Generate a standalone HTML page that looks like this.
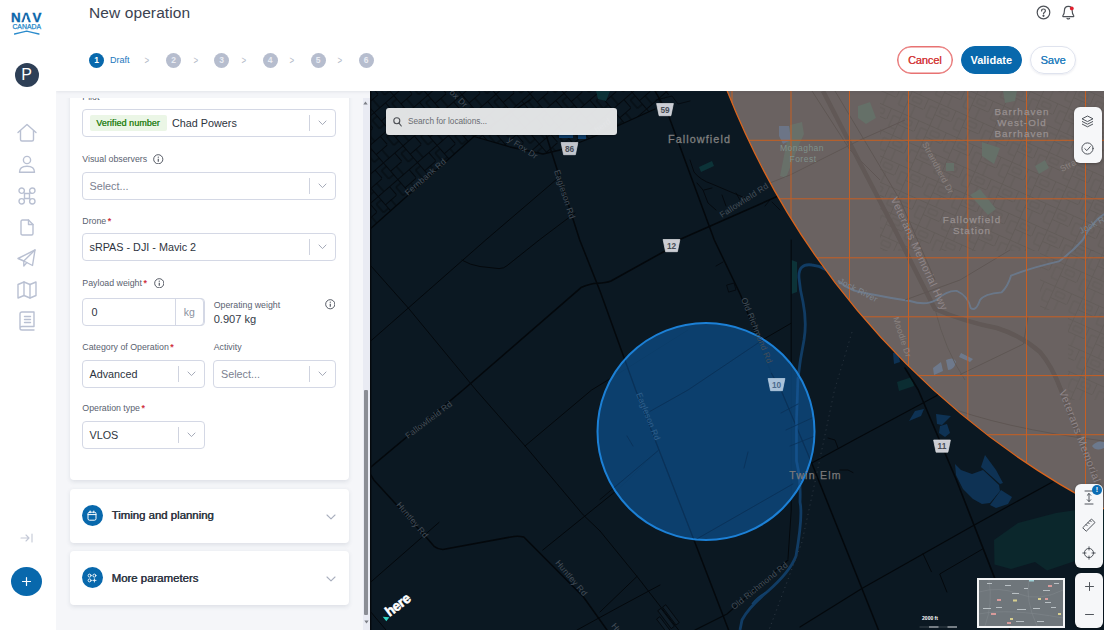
<!DOCTYPE html>
<html lang="en">
<head>
<meta charset="utf-8">
<title>New operation</title>
<style>
*{box-sizing:border-box;margin:0;padding:0}
html,body{width:1104px;height:630px;overflow:hidden;background:#fff;font-family:"Liberation Sans",sans-serif;color:#2b3340}
.abs{position:absolute}
#side{position:absolute;left:0;top:0;width:56px;height:630px;background:#fff;z-index:5}
#side svg{position:absolute;overflow:visible}
.nico{stroke:#b9c0d2;stroke-width:1.4;fill:none;stroke-linecap:round;stroke-linejoin:round}
#hdr{position:absolute;left:56px;top:0;width:1048px;height:91px;background:#fff;box-shadow:0 1px 3px rgba(40,50,80,.09);z-index:3}
#title{position:absolute;left:33px;top:3.500px;font-size:15.5px;color:#3b4250;letter-spacing:.1px}
.step{position:absolute;top:53px;width:15px;height:15px;border-radius:50%;background:#b6bdce;color:#e9ecf3;font-size:8.5px;font-weight:bold;text-align:center;line-height:15px}
.step.on{background:#0868ac;color:#fff}
.gt{position:absolute;top:54px;font-size:10px;color:#b3b9c8;line-height:13px;transform:scaleX(.8)}
.btn{position:absolute;top:46px;height:28px;border-radius:14px;font-size:11px;text-align:center;line-height:26px;border:1px solid}
#panel{position:absolute;left:56px;top:91px;width:314px;height:539px;background:#f5f6f9;overflow:hidden}
.card{position:absolute;left:13.5px;width:279.5px;background:#fff;border-radius:4px;box-shadow:0 1.500px 4px rgba(60,70,100,.12)}
.lbl{position:absolute;font-size:8.8px;color:#59616f;white-space:nowrap;line-height:10px}
.lbl i{font-style:normal;color:#d0343f;font-weight:bold;margin-left:1.5px}
.sel{position:absolute;height:28px;border:1px solid #d4d8e5;border-radius:4px;background:#fff;font-size:10.8px;line-height:27px;color:#2d3440;padding-left:7px;white-space:nowrap}
.sel.ph{color:#7b8190}
.sel b{position:absolute;right:25px;top:5px;width:1px;height:16px;background:#cfd3df}
.sel svg{position:absolute;right:8px;top:10px}
.info{position:absolute;width:10.5px;height:10.5px}
.ctitle{position:absolute;left:42px;font-size:11.4px;font-weight:normal;color:#2c333f;text-shadow:.45px 0 0 #2c333f;letter-spacing:0;white-space:nowrap}
.cico{position:absolute;left:12px;width:21px;height:21px;border-radius:50%;background:#0868ac}
#map{position:absolute;left:370px;top:91px;width:734px;height:539px;background:#0b1822;overflow:hidden}
.mbox{position:absolute;background:#f6f7f9;border-radius:6px;box-shadow:0 1px 3px rgba(0,0,0,.3)}
</style>
</head>
<body>

<!-- ============ SIDEBAR ============ -->
<div id="side">
  <!-- logo -->
  <svg style="left:11px;top:11px" width="32" height="26" viewBox="0 0 32 26" font-family="Liberation Sans,sans-serif">
    <g font-weight="bold" font-size="13.3" fill="#0a66ab">
      <text x="0.100 10.360 21.420" y="11.300" stroke="#0a66ab" stroke-width=".35">NAV</text>
      <path d="M12.350 11.900 L12.557 11.300 L13.369 8.962 L13.797 7.520 L14.959 3.900 L16.127 7.520 L16.556 8.962 L17.368 11.300 L17.580 11.900 Z" fill="#fff"/>
    </g>
    <text x="15.700" y="18.400" text-anchor="middle" font-size="6.500" fill="#2386c8" stroke="#2386c8" stroke-width=".25" textLength="28.600" lengthAdjust="spacingAndGlyphs">CANADA</text>
    <path d="M3.600 23 Q9 21.600 15.700 20.200 Q22 21.600 27.900 23" stroke="#2a8bcc" stroke-width="1.300" fill="none" stroke-linecap="round"/>
  </svg>
  <!-- avatar -->
  <div class="abs" style="left:14.5px;top:62.5px;width:24px;height:24px;border-radius:50%;background:#2e3f56;color:#fff;font-size:16px;line-height:24px;text-align:center">P</div>
  <!-- nav icons -->
  <svg style="left:17px;top:123px" width="20" height="20" viewBox="0 0 20 20" class="nico"><path d="M1 9.5 L10 1.5 L19 9.5"/><path d="M3.5 7.8 V16.5 Q3.5 18 5 18 H15 Q16.500 18 16.5 16.5 V7.8"/></svg>
  <svg style="left:18px;top:155px" width="18" height="19" viewBox="0 0 18 19" class="nico"><circle cx="9" cy="5" r="3.6"/><path d="M1.5 17.2 Q1.5 11.2 9 11.2 Q16.500 11.2 16.5 17.2 Z"/></svg>
  <svg style="left:18px;top:187px" width="18" height="18" viewBox="0 0 18 18" class="nico"><rect x="6.500" y="6.500" width="5" height="5" rx=".5"/><circle cx="3.700" cy="3.700" r="2.700"/><circle cx="14.300" cy="3.700" r="2.700"/><circle cx="3.700" cy="14.300" r="2.700"/><circle cx="14.300" cy="14.300" r="2.700"/><path d="M5.600 5.600 L6.600 6.600 M12.400 5.600 L11.400 6.600 M5.600 12.400 L6.600 11.400 M12.400 12.400 L11.400 11.400"/></svg>
  <svg style="left:20px;top:219px" width="14" height="17" viewBox="0 0 14 17" class="nico"><path d="M1 2.500 Q1 1 2.500 1 H8.5 L13 5.500 V14.5 Q13 16 11.5 16 H2.500 Q1 16 1 14.5 Z"/><path d="M8.5 1 V5.500 H13"/></svg>
  <svg style="left:17px;top:249px" width="19" height="19" viewBox="0 0 19 19" class="nico"><path d="M18 1 L1 9.500 L6.800 12 L15.500 16.500 Z"/><path d="M18 1 L6.800 12 V17 L9.800 13.600"/></svg>
  <svg style="left:17px;top:281px" width="20" height="18" viewBox="0 0 20 18" class="nico"><path d="M1 3.500 L7 1 L13 3.500 L19 1 V14.5 L13 17 L7 14.5 L1 17 Z"/><path d="M7 1 V14.5 M13 3.500 V17"/></svg>
  <svg style="left:19px;top:311px" width="16" height="20" viewBox="0 0 16 20" class="nico"><path d="M3 1 H15 V15.500 H3 Q1 15.500 1 17.2 Q1 19 3 19 H15 M1 17.2 V3 Q1 1 3 1"/><path d="M5.500 5.500 H11.5 M5.500 8.5 H11.5 M5.500 11.5 H11.5"/></svg>
  <!-- collapse -->
  <svg style="left:20px;top:533px" width="13" height="10" viewBox="0 0 13 10" fill="none" stroke="#c3c8d6" stroke-width="1.100" stroke-linecap="round" stroke-linejoin="round"><path d="M1 5 H9 M6 2 L9 5 L6 8 M12 1 V9"/></svg>
  <!-- add -->
  <div class="abs" style="left:11px;top:566.5px;width:31px;height:29px;border-radius:50%;background:#0868ac"></div>
  <svg style="left:22px;top:576.5px" width="9" height="9" viewBox="0 0 9 9" stroke="#fff" stroke-width="1.200" stroke-linecap="round"><path d="M4.500 0.500 V8.5 M0.500 4.500 H8.5"/></svg>
</div>

<!-- ============ HEADER ============ -->
<div id="hdr">
  <div id="title">New operation</div>
  <div class="step on" style="left:33px">1</div>
  <div class="abs" style="left:54px;top:55px;font-size:9px;color:#1c77bd;line-height:11px">Draft</div>
  <div class="gt" style="left:88px">&gt;</div>
  <div class="step" style="left:110px">2</div>
  <div class="gt" style="left:136.500px">&gt;</div>
  <div class="step" style="left:158px">3</div>
  <div class="gt" style="left:184.500px">&gt;</div>
  <div class="step" style="left:206.500px">4</div>
  <div class="gt" style="left:232.500px">&gt;</div>
  <div class="step" style="left:254.500px">5</div>
  <div class="gt" style="left:281px">&gt;</div>
  <div class="step" style="left:302.500px">6</div>

  <!-- help + bell -->
  <svg class="abs" style="left:979.500px;top:5px" width="15" height="15" viewBox="0 0 15 15" fill="none" stroke="#4d5157" stroke-width="1.200"><circle cx="7.500" cy="7.500" r="6.300"/><path d="M5.600 6 Q5.600 4 7.500 4 Q9.400 4 9.400 5.700 Q9.400 6.800 8.300 7.400 Q7.500 7.900 7.500 8.800" stroke-linecap="round"/><circle cx="7.500" cy="10.800" r=".5" fill="#4d5157"/></svg>
  <svg class="abs" style="left:1005px;top:5px" width="15" height="16" viewBox="0 0 15 16" fill="none" stroke="#4d5157" stroke-width="1.200" stroke-linecap="round" stroke-linejoin="round"><path d="M7.300 1.300 C4.200 1.300 3.400 3.700 3.400 5.700 C3.400 8.200 3 9.600 1.900 10.600 Q1.500 11.600 2.600 11.600 H12 Q13.100 11.600 12.700 10.600 C11.600 9.600 11.200 8.200 11.200 5.700 C11.200 3.700 10.400 1.300 7.300 1.300 Z"/><path d="M6 13.300 Q7.300 14.600 8.600 13.300"/><circle cx="10.800" cy="3.400" r="1.900" fill="#e0202e" stroke="none"/></svg>

  <div class="btn" style="left:841px;width:55.500px;border-color:#e87272;box-shadow:inset 0 0 0 .5px #e87272;color:#d43c3c;font-weight:bold;letter-spacing:-.1px"><span style="font-weight:normal;text-shadow:.3px 0 0 #d43c3c">Cancel</span></div>
  <div class="btn" style="left:904.500px;width:61.500px;border-color:#0868ac;background:#0868ac;color:#fff;font-weight:bold">Validate</div>
  <div class="btn" style="left:974px;width:46px;border-color:#dfe3ee;color:#2a7fbe;box-shadow:0 1px 2px rgba(80,90,130,.12)"><span style="text-shadow:.3px 0 0 #2a7fbe">Save</span></div>
</div>

<!-- ============ LEFT PANEL ============ -->
<div id="panel">
  <!-- main form card (scrolled; top cut off) -->
  <div class="card" style="top:-30px;height:419px;border-radius:0 0 4px 4px">
    <div class="lbl" style="left:12.800px;top:30.500px">Pilot <i>*</i></div>

    <div class="sel" style="left:12px;top:48px;width:254px">
      <span class="abs" style="left:7px;top:4.500px;width:77px;height:16.5px;border-radius:2px;background:#ebf6e6;color:#2f8520;font-size:8.9px;line-height:16.5px;text-align:center;text-shadow:.25px 0 0 #2f8520;letter-spacing:.1px">Verified number</span>
      <span class="abs" style="left:89.500px;top:0">Chad Powers</span>
      <b></b><svg width="9" height="6" viewBox="0 0 9 6" fill="none" stroke="#a5aab8" stroke-width="1" stroke-linecap="round" stroke-linejoin="round"><path d="M1 1 L4.500 4.600 L8 1"/></svg>
    </div>

    <div class="lbl" style="left:12.800px;top:93px">Visual observers</div>
    <svg class="info" style="left:83.500px;top:92.500px" viewBox="0 0 11 11" fill="none" stroke="#3d434e" stroke-width=".9"><circle cx="5.500" cy="5.500" r="4.800"/><path d="M5.500 4.900 V8" stroke-width="1.100"/><circle cx="5.500" cy="3.300" r=".6" fill="#3d434e" stroke="none"/></svg>
    <div class="sel ph" style="left:12px;top:111px;width:254px">Select...
      <b></b><svg width="9" height="6" viewBox="0 0 9 6" fill="none" stroke="#a5aab8" stroke-width="1" stroke-linecap="round" stroke-linejoin="round"><path d="M1 1 L4.500 4.600 L8 1"/></svg>
    </div>

    <div class="lbl" style="left:12.800px;top:154.500px">Drone<i>*</i></div>
    <div class="sel" style="left:12px;top:172px;width:254px">sRPAS - DJI - Mavic 2
      <b></b><svg width="9" height="6" viewBox="0 0 9 6" fill="none" stroke="#a5aab8" stroke-width="1" stroke-linecap="round" stroke-linejoin="round"><path d="M1 1 L4.500 4.600 L8 1"/></svg>
    </div>

    <div class="lbl" style="left:12.800px;top:217px">Payload weight<i>*</i></div>
    <svg class="info" style="left:84px;top:216.500px" viewBox="0 0 11 11" fill="none" stroke="#3d434e" stroke-width=".9"><circle cx="5.500" cy="5.500" r="4.800"/><path d="M5.500 4.900 V8" stroke-width="1.100"/><circle cx="5.500" cy="3.300" r=".6" fill="#3d434e" stroke="none"/></svg>
    <div class="sel" style="left:12px;top:236.500px;width:123.500px;padding-left:9px">0
      <span class="abs" style="right:0;top:-1px;width:29.500px;height:28px;border:1px solid #d4d8e5;border-radius:0 4px 4px 0;color:#8c92a0;text-align:center;font-size:10.500px">kg</span>
    </div>
    <div class="lbl" style="left:144.200px;top:238.500px">Operating weight</div>
    <div class="abs" style="left:144.200px;top:252px;font-size:11.100px;line-height:13px;color:#343b48">0.907 kg</div>
    <svg class="info" style="left:255px;top:238px" viewBox="0 0 11 11" fill="none" stroke="#3d434e" stroke-width=".9"><circle cx="5.500" cy="5.500" r="4.800"/><path d="M5.500 4.900 V8" stroke-width="1.100"/><circle cx="5.500" cy="3.300" r=".6" fill="#3d434e" stroke="none"/></svg>

    <div class="lbl" style="left:12.800px;top:281px">Category of Operation<i>*</i></div>
    <div class="lbl" style="left:144.200px;top:281px">Activity</div>
    <div class="sel" style="left:12px;top:298.500px;width:123px">Advanced
      <b></b><svg width="9" height="6" viewBox="0 0 9 6" fill="none" stroke="#a5aab8" stroke-width="1" stroke-linecap="round" stroke-linejoin="round"><path d="M1 1 L4.500 4.600 L8 1"/></svg>
    </div>
    <div class="sel ph" style="left:143.500px;top:298.500px;width:122.500px">Select...
      <b></b><svg width="9" height="6" viewBox="0 0 9 6" fill="none" stroke="#a5aab8" stroke-width="1" stroke-linecap="round" stroke-linejoin="round"><path d="M1 1 L4.500 4.600 L8 1"/></svg>
    </div>

    <div class="lbl" style="left:12.800px;top:342px">Operation type<i>*</i></div>
    <div class="sel" style="left:12px;top:360px;width:123px">VLOS
      <b></b><svg width="9" height="6" viewBox="0 0 9 6" fill="none" stroke="#a5aab8" stroke-width="1" stroke-linecap="round" stroke-linejoin="round"><path d="M1 1 L4.500 4.600 L8 1"/></svg>
    </div>
  </div>

  <!-- Timing and planning -->
  <div class="card" style="top:398px;height:53.500px">
    <div class="cico" style="top:16px"><svg class="abs" style="left:5.500px;top:5px" width="10" height="11" viewBox="0 0 10 11" fill="none" stroke="#fff" stroke-width="1" stroke-linecap="round" stroke-linejoin="round"><rect x="1" y="2.200" width="8" height="8" rx="1.500"/><path d="M1 4.600 H9 M3.200 1 V2.800 M6.800 1 V2.800"/></svg></div>
    <div class="ctitle" style="top:19.500px">Timing and planning</div>
    <svg class="abs" style="left:256px;top:24.500px" width="10" height="6" viewBox="0 0 10 6" fill="none" stroke="#a9afbe" stroke-width="1.100" stroke-linecap="round" stroke-linejoin="round"><path d="M1 1 L5 4.800 L9 1"/></svg>
  </div>

  <!-- More parameters -->
  <div class="card" style="top:460.300px;height:54px">
    <div class="cico" style="top:16px"><svg class="abs" style="left:5.500px;top:5.500px" width="10" height="10" viewBox="0 0 10 10" fill="none" stroke="#fff" stroke-width=".9" stroke-linecap="round"><circle cx="2.600" cy="2.600" r="1.500"/><circle cx="7.400" cy="2.600" r="1.500"/><circle cx="2.600" cy="7.400" r="1.500"/><path d="M7.400 5.800 V9 M5.800 7.400 H9"/></svg></div>
    <div class="ctitle" style="top:20.500px">More parameters</div>
    <svg class="abs" style="left:256px;top:24.500px" width="10" height="6" viewBox="0 0 10 6" fill="none" stroke="#a9afbe" stroke-width="1.100" stroke-linecap="round" stroke-linejoin="round"><path d="M1 1 L5 4.800 L9 1"/></svg>
  </div>

  <div class="abs" style="left:0;top:0;width:306px;height:6.5px;background:#f5f6f9"></div>
  <!-- scrollbar -->
  <div class="abs" style="left:306.800px;top:6.800px;width:7.200px;height:533px;background:#e9ebf3"></div>
  <div class="abs" style="left:308px;top:299px;width:4px;height:225px;background:#8b8e95;border-radius:1px"></div>
  <svg class="abs" style="left:307.300px;top:9.600px" width="5" height="4" viewBox="0 0 5 4"><path d="M2.500 .5 L4.700 3.500 H.3 Z" fill="#7b7e86"/></svg>
  <svg class="abs" style="left:307.500px;top:529px" width="5" height="4" viewBox="0 0 5 4"><path d="M2.500 3.500 L4.700 .5 H.3 Z" fill="#7b7e86"/></svg>
</div>


<!-- ============ MAP ============ -->
<div id="map">
<svg class="abs" style="left:0;top:0" width="734" height="539" viewBox="370 91 734 539" font-family="Liberation Sans,sans-serif">
  <defs>
    <clipPath id="zoneclip"><circle cx="1473.6" cy="-203.5" r="802.4"/></clipPath>
    <clipPath id="nwclip"><path d="M369 91 H672 L655 109 L592 137.500 L560 150 L543 154 L510 147 L474 136.500 L369 230 Z"/></clipPath>
    <pattern id="streets" width="26" height="22" patternUnits="userSpaceOnUse" patternTransform="rotate(-41)">
      <path d="M0 .5 H26 M0 11.5 H15 M.5 0 V22 M15.500 0 V11 M8 11.500 V22 M20 5 H26 M20 5 V16 H26" stroke="#04090e" stroke-width="1" fill="none"/>
    </pattern>
    <pattern id="zstreets" width="30" height="24" patternUnits="userSpaceOnUse" patternTransform="rotate(24)">
      <path d="M0 .5 H30 M0 12.500 H18 M.5 0 V24 M18.500 0 V12 M9 12.500 V24 M23 6 H30 M23 6 V18 H30 M4 4 H13 V9 H4 Z" stroke="#5e5654" stroke-width="1" fill="none"/>
    </pattern>
  </defs>

  <rect x="369" y="91" width="735" height="539" fill="#0b1822"/>

  <!-- green / water patches on dark -->
  <path d="M791.500 260 L797 262 L797 292 L791.500 294 Z" fill="#0c3338"/>
  <path d="M994 540 L1018 523 L1056 513 L1104 506 V560 L1075 561 L1047 570.500 L1035 562 L1011 569 L994.500 564.500 Z" fill="#0b272c"/>
  <path d="M922 117 l8 -4 l3 5 l-9 4 z" fill="#0c3338"/>
  <path d="M893 353 l5 -2 l2 11 l-6 2z" fill="#0e3254"/>
  <path d="M897 382 l15 -5 l2 9 l-15 5z" fill="#0b2d32"/>
  <path d="M699 167 l13 -6 l2 5 l-13 6 z" fill="#0c3338"/>
  <g fill="#0e3254">
    <path d="M909 421 L915 411 L924 409 L921 416 Z"/>
    <path d="M936 414 L951 416 L942 425 L937 424 Z"/>
    <path d="M940 426 L947 424 L950 433 L945 437 L939 433 Z"/>
    <path d="M955 464 L961 470 L972 474 L983 470 L999 485 L1000 491 L990 503 L982 504 L973 499 L963 489 L956 475 Z"/>
    <path d="M985 455 L996 470 L1003 483 L1000 484 L981 467 Z"/>
    <path d="M1001 490 L1012 497 L1008 504 L996 508 L990 505 Z"/>
    
  </g>

  <!-- Jock river on dark -->
  <path d="M838 280.500 Q826 266 812 265 Q798 263 799 278 Q800 290 803 302 Q807 322 804 340 Q800 360 798 378 L796.500 420 L796.500 461 Q801 480 800 502 Q803 516 796 556 Q790 572 767 592 Q748 608 742 620 L740 630" stroke="#113c64" stroke-width="2.800" fill="none" stroke-linejoin="round"/>
  <path d="M767 592 Q758 596 752 604" stroke="#12406b" stroke-width="1.500" fill="none"/>

  <!-- dotted rail line -->
  <path d="M852 332 Q840 372 834.500 390 L815 482 L802 542 L769 630" stroke="#2a3540" stroke-width="1" stroke-dasharray="1.200 3.600" fill="none"/>

  <!-- dense subdivision, NW corner -->
  <rect x="369" y="91" width="300" height="150" fill="url(#streets)" clip-path="url(#nwclip)"/>

  <!-- roads -->
  <g stroke="#04080c" fill="none" stroke-linecap="round" stroke-linejoin="round">
    <!-- Fernbank -->
    <path d="M369 230 L474 136.500 L530 100" stroke-width="1.300"/>
    <path d="M474 136.500 L510 147 L543 154 L560 150 L592 137.500 L655 109" stroke-width="1.300"/>
    <!-- thin parallel -->
    <path d="M369 342.500 L408.300 308 L485.700 240 L557 179" stroke-width="1"/>
    <!-- NW-SE line B -->
    <path d="M369 263.800 L408.300 308 L476 390 L526 447 L583.300 515 L600 531" stroke-width="1"/>
    <!-- curved C -->
    <path d="M462 260.200 Q470 265 480 266.500 L499 268.600 Q504 268.500 507 265.700 L539.200 240 L575 213" stroke-width="1"/>
    <!-- Fallowfield Rd -->
    <path d="M369 468.600 L463 390 L581 287.600 Q590 283.500 597.600 283.300 Q606 283 611 281 L665.500 250.700 L678.600 240 L781 194.800" stroke-width="1.600"/>
    <!-- Eagleson -->
    <path d="M546.400 136 L579.700 240 L600 291 L635.700 390 L694 540 L728.600 630" stroke-width="1.500"/>
    <!-- Old Richmond -->
    <path d="M655 91 L667.900 113.800 L714.300 240 L740.500 294.800 L771.400 373.300 L781 390 L812 463.800 L878.500 630" stroke-width="1.500"/>
    <!-- E / F -->
    <path d="M525 446 L591.600 390 L619 373.300 L688 330" stroke-width="1"/>
    <path d="M542.800 550 L619 488.500 L658 450.700" stroke-width="1"/>
    <!-- Huntley -->
    <path d="M369 472 L373.800 480 L426 537 L434.500 546.700 Q438 549.500 442.800 549.500 L514 536.400 Q519 535.800 523.800 537 L583.300 596.700 L607 630" stroke-width="1.500"/>
    <path d="M369 583.600 L439 522.400" stroke-width="1"/>
    <path d="M370 611 L386 630" stroke-width="1"/>
    <path d="M577 630 L619 607 L660 585" stroke-width="1"/>
    <!-- link & boundary -->
    <path d="M764.300 338.800 L791 323.300 M791.200 240 V511 L788 558.600" stroke-width="1"/>
    <path d="M764 339 L688 390 L650 411.400" stroke-width=".8"/>
    <path d="M695 540 L792.800 484" stroke-width=".8"/>
    <path d="M600 499.500 L658 450.700" stroke-width=".8"/>
    <!-- south-middle -->
    <path d="M600 531 L637 576.400 L678.600 630 M600 612 L637 576.400" stroke-width="1"/>
    <path d="M695 630 L727 614 L788 560" stroke-width="1.200"/>
    <g transform="translate(666,620) rotate(53)" stroke-width=".8" fill="#0f1d28"><rect x="-12" y="-9" width="22" height="4"/><rect x="-12" y="-3" width="22" height="4"/><rect x="-6" y="3" width="16" height="4"/></g>
    <path d="M828 438 L835 440 L838 448 M840 470 L848 470 L853 472.600" stroke-width=".9"/>
    <!-- Moodie / 11 -->
    <path d="M905 368 L918.300 390 L956.400 480 L994.500 577.600 L1010 630" stroke-width="1.600"/>
    <path d="M810 464 L854 440 L936 396 L945 388" stroke-width="1.100"/>
    <path d="M1052.800 481.700 L973 525.700 L862.300 588.300 L800 627" stroke-width="1.200"/>
    <path d="M923 553.800 L931.400 571.700 M982.600 549 L939.700 574 L946.900 592" stroke-width="1"/>
    <!-- small stubs near Fallowfield -->
    <path d="M690 160 L694 172 Q700 180 712 184 L745 198 M697 183 L703 190 L708 203 L716 210 M704 190 L712 188 M722 195 L726 206 M736 193 L740 200" stroke-width=".9"/>
    <path d="M656 100 L672 96 L678 104 L690 101" stroke-width=".8"/>
    <path d="M727 285 L734 283 L736 290 L729 292 Z M716 266 L723 262" stroke-width=".8"/>
    <path d="M780 210 L772 202 M770 200 L765 206" stroke-width=".8"/>
  </g>

  <!-- restricted zone -->
  <g clip-path="url(#zoneclip)">
    <rect x="700" y="91" width="404" height="420" fill="#6b6361"/>
    <!-- faint streets NE -->
    <rect x="880" y="91" width="224" height="160" fill="url(#zstreets)" opacity=".55"/>
    <rect x="1040" y="250" width="64" height="60" fill="url(#zstreets)" opacity=".5"/><rect x="1068" y="310" width="36" height="90" fill="url(#zstreets)" opacity=".5"/>
    <g fill="#667069">
      <path d="M858 106 l12 -4 l6 16 l-10 6 l-8 -6z"/><path d="M1003 91 h14 l-2 10 l-10 2z"/><path d="M982 142 l18 6 l-6 16 l-12 -8z"/><path d="M946 163 h8 v8 h-8z"/><path d="M1035 166 l10 -6 l4 8 l-10 6z"/><path d="M970 195 l10 -6 l16 20 l-8 6z"/><path d="M790 125 l12 -3 l2 12 l-8 18 l-10 26 l-6 -2 z" fill="#69706a"/>
    </g>
    <path d="M779 126 h10 l2 14 l-8 4 l-4 -8z" fill="#6d7587"/>
    <path d="M1092 446 q5 -6 12 -4 v6 q-8 4 -12 -2z" fill="#6d7a8e"/>
    <path d="M933 368 l8 -6 l2 9 l-9 4z M946 360 q8 -4 10 2 q-2 8 -8 8z M961 353 l12 6 l-3 3 l-11 -5z" fill="#6e7a8d"/>
    <!-- Veterans Memorial Hwy -->
    <path d="M823 91 L860 163 L896 232 Q920 280 935 309 Q965 322 997 328 Q1022 336 1040 352 Q1052 366 1061 390 Q1080 440 1104 497" stroke="#615957" stroke-width="4.500" fill="none"/>
    <path d="M935 309 Q945 350 965 380" stroke="#625a58" stroke-width="1" fill="none"/>
    <!-- Jock river in zone -->
    <path d="M838 280.500 Q850 292 870 294 Q890 298 910 301 Q926 306 936 300 Q948 290 957 291 Q968 296 970.700 308 Q976 312 980 300 Q984 294 1001.600 292.400 Q1008 286 1011 275.700 Q1030 268 1058.800 261.400 Q1072 252 1082.600 240 Q1092 222 1104 214" stroke="#6b788a" stroke-width="1.900" fill="none"/>
    <!-- faint roads -->
    <g stroke="#5f5755" stroke-width="1" fill="none">
      <path d="M727 200 L790 175 L860 140 L905 120"/><path d="M812 91 L850 150 L880 180"/><path d="M835 91 L900 200 L935 280"/><path d="M940 404 Q1000 428 1104 441"/><path d="M960 374.600 L1023.500 344 L1028 316"/><path d="M905 300 L960 280 L1010 250"/>
    </g>
    <!-- grid -->
    <g stroke="#cc5f20" stroke-width="1" opacity=".95">
      <path d="M732 91 V120 M791 91 V260 M849.500 91 V320 M908.500 91 V380 M967.800 91 V430 M1026.500 91 V475 M1085.500 91 V510"/>
      <path d="M740 140.300 H1104 M770 198.800 H1104 M805 257.800 H1104 M850 316.800 H1104 M905 375.600 H1104 M975 434.700 H1104"/>
    </g>
  </g>
  <circle cx="1473.600" cy="-203.500" r="802.400" fill="none" stroke="#d9651f" stroke-width="1.300"/>

  <!-- operation circle -->
  <circle cx="706" cy="431.500" r="108.500" fill="#0d487c" fill-opacity=".84" stroke="#1c80d6" stroke-width="2"/>

  <!-- roads seen through the circle -->
  <defs><clipPath id="opclip"><circle cx="706" cy="431.500" r="107.500"/></clipPath></defs>
  <g clip-path="url(#opclip)" fill="none" stroke="#0a3158" stroke-linecap="round">
    <path d="M600 291 L635.700 390 L694 540" stroke-width="1.200"/>
    <path d="M764.300 338.800 L688 390 L650 411.400" stroke-width=".9"/>
    <path d="M600 499.500 L658 450.700" stroke-width=".9"/>
    <path d="M695 540 L792.800 484" stroke-width=".9"/>
    <path d="M771.400 373.300 L781 390 L812 463.800" stroke-width="1.100"/>
    <path d="M798 378 L796.500 420 L796.500 461 Q801 480 800 502" stroke="#14508a" stroke-width="2.600"/>
    <path d="M781 413 L798 404 M786 430 L812 418 M790 446 L815 436" stroke-width=".8"/>
    <path d="M627 436 L633 446 M748 452 L744 468" stroke-width=".8"/>
  </g>

  <!-- labels -->
  <g fill="#444e58" font-size="8.500" letter-spacing=".2">
    <text transform="translate(408,196) rotate(-41)">Fernbank Rd</text>
    <text transform="translate(507,141) rotate(33)">y Fox Dr</text>
    <text transform="translate(449,93) rotate(45)">ox Dr</text>
    <text transform="translate(554,171) rotate(72)">Eagleson Rd</text>
    <text transform="translate(722,218) rotate(-33)">Fallowfield Rd</text>
    <text transform="translate(597,133) rotate(-35)">herd</text>
    <text transform="translate(408,439) rotate(-37)">Fallowfield Rd</text>
    <text transform="translate(396,505) rotate(50)">Huntley Rd</text>
    <text transform="translate(555,563) rotate(50)">Huntley Rd</text>
    <text transform="translate(611,626) rotate(50)">Hu</text>
    <text transform="translate(741,299) rotate(68)">Old Richmond Rd</text>
    <text transform="translate(734,610) rotate(-39)">Old Richmond Rd</text>
    <text transform="translate(636,394) rotate(68)" fill="#2f5f8c">Eagleson Rd</text>
  </g>
  <g fill="#8a8280" font-size="8.500" letter-spacing=".3">
    <text transform="translate(838,283) rotate(27)" fill="#7e858f">Jock River</text>
    <text transform="translate(1081,234) rotate(-28)" fill="#7a8590">Jock R</text>
    <text transform="translate(893,318) rotate(72)">Moodie Dr</text>
    <text transform="translate(922,144) rotate(62)">Strandherd Dr</text>
    <text transform="translate(1062,172) rotate(-28)">Stra</text>
  </g>
  <g fill="#90878a" font-size="10" letter-spacing=".4">
    <text transform="translate(890.500,199) rotate(65.500)" font-size="10.600" letter-spacing=".55">Veterans Memorial Hwy</text>
    <text transform="translate(1059,391.500) rotate(69)" font-size="10.600" letter-spacing=".6">Veterans Memorial</text>
  </g>
  <g font-weight="bold" letter-spacing="1">
    <text x="699.500" y="142.700" text-anchor="middle" font-size="10.800" fill="#7f7f7f" font-weight="normal" stroke="#7f7f7f" stroke-width=".3" letter-spacing="1.100">Fallowfield</text>
    <text x="815.500" y="478.700" text-anchor="middle" font-size="10.500" fill="#7a797a" letter-spacing="1.250" font-weight="normal" stroke="#7a797a" stroke-width=".25">Twin Elm</text>
    <g fill="#989090" font-size="9.800" text-anchor="middle" font-weight="normal" stroke="#989090" stroke-width=".25" letter-spacing="1.100">
      <text x="1022" y="114.500">Barrhaven</text><text x="1022" y="125.500">West-Old</text><text x="1022" y="136.500">Barrhaven</text>
      <text x="972" y="223">Fallowfield</text><text x="972" y="234">Station</text>
    </g>
    <g fill="#7f918b" font-size="8.500" text-anchor="middle" letter-spacing=".5" font-weight="normal">
      <text x="802" y="151">Monaghan</text><text x="803" y="161.500">Forest</text>
    </g>
  </g>

  <!-- route shields -->
  <g font-size="8.300" font-weight="bold" text-anchor="middle" fill="#484d56">
    <g transform="translate(665,109.500)"><path d="M-8.400 -6 H8.400 L5.900 6.200 H-5.900 Z" fill="#cbcdd4" stroke="#dcdee3" stroke-width=".7"/><text y="3.100">59</text></g>
    <g transform="translate(569.500,148.500)"><path d="M-8.400 -6 H8.400 L5.900 6.200 H-5.900 Z" fill="#c2c5cc" stroke="#d3d6dc" stroke-width=".7"/><text y="3.100">86</text></g>
    <g transform="translate(671.500,245.500)"><path d="M-8.400 -6 H8.400 L5.900 6.200 H-5.900 Z" fill="#cbcdd4" stroke="#dcdee3" stroke-width=".7"/><text y="3.100">12</text></g>
    <g transform="translate(776.500,384.500)"><path d="M-8.400 -6 H8.400 L5.900 6.200 H-5.900 Z" fill="#a9c2da" stroke="#bdd2e6" stroke-width=".7"/><text y="3.100" fill="#4a6a8e">10</text></g>
    <g transform="translate(942,446)"><path d="M-8.400 -6 H8.400 L5.900 6.200 H-5.900 Z" fill="#cbcdd4" stroke="#dcdee3" stroke-width=".7"/><text y="3.100">11</text></g>
  </g>
  <!-- small blue POI under search -->
  <path d="M559 132 h14 v6 h-14z M578 133 h8 v6 h-8z" fill="#0e3c68"/>
  <path d="M596 91 l14 0 l-4 10 l-8 -2z" fill="#0c3338"/>

  <!-- here logo -->
  <g transform="translate(389.500,617) rotate(-37)">
    <text x="0" y="0" font-size="14" font-weight="bold" fill="#fff" stroke="#fff" stroke-width=".55" letter-spacing="-.5">here</text>
  </g>
  <path d="M382.700 616.800 L389.400 617.200 L386.300 621.200 Z" fill="#2fd6c4"/>

  <!-- scale -->
  <text x="930" y="619.500" text-anchor="middle" font-size="5" font-weight="bold" fill="#fff">2000 ft</text>
  <path d="M919.500 627 H957" stroke="#3a444d" stroke-width="1.200"/>
  <path d="M929 627 H938.500 M947.500 627 H957" stroke="#c9ced3" stroke-width="1.200"/>
  <!-- left edge line -->
  <path d="M370.700 91 V630" stroke="#05090d" stroke-width="1.400"/>
</svg>

  <!-- search box -->
  <div class="abs" style="left:16px;top:16.500px;width:231px;height:27.500px;border-radius:3px;background:rgba(236,237,238,.95);box-shadow:0 1px 2px rgba(0,0,0,.35)">
    <svg class="abs" style="left:7px;top:9px" width="9" height="10" viewBox="0 0 9 10" fill="none" stroke="#4a4d52" stroke-width="1.100" stroke-linecap="round"><circle cx="3.800" cy="3.800" r="3"/><path d="M6 6.200 L8.300 9"/></svg>
    <div class="abs" style="left:22px;top:0;font-size:8.300px;line-height:27.500px;color:#6a6d72;letter-spacing:-.05px">Search for locations...</div>
  </div>

  <!-- layer controls -->
  <div class="mbox" style="left:704px;top:16px;width:27.500px;height:56px">
    <svg class="abs" style="left:7px;top:8px" width="13" height="13" viewBox="0 0 13 13" fill="none" stroke="#50555c" stroke-width="1" stroke-linejoin="round"><path d="M6.500 1 L12 3.800 L6.500 6.600 L1 3.800 Z"/><path d="M1 6.400 L6.500 9.200 L12 6.400"/><path d="M1 9 L6.500 11.800 L12 9"/></svg>
    <svg class="abs" style="left:7px;top:35.200px" width="13" height="13" viewBox="0 0 13 13" fill="none" stroke="#50555c" stroke-width="1" stroke-linecap="round" stroke-linejoin="round"><circle cx="6.500" cy="6.500" r="5.600"/><path d="M3.800 6.700 L5.800 8.600 L9.300 4.600"/></svg>
  </div>

  <!-- tools -->
  <div class="mbox" style="left:705px;top:392.500px;width:27.500px;height:84px">
    <svg class="abs" style="left:8.500px;top:6.500px" width="10" height="15" viewBox="0 0 10 15" fill="none" stroke="#50555c" stroke-width="1" stroke-linecap="round" stroke-linejoin="round"><path d="M1 1 H9 M1 14 H9 M5 3.500 V11.500 M3.200 5.300 L5 3.500 L6.800 5.300 M3.200 9.700 L5 11.500 L6.800 9.700"/></svg>
    <svg class="abs" style="left:7px;top:34px" width="14" height="14" viewBox="0 0 14 14" fill="none" stroke="#50555c" stroke-width="1" stroke-linejoin="round" stroke-linecap="round"><path d="M1 9.500 L9.500 1 L13 4.500 L4.500 13 Z"/><path d="M4 6.500 L5.300 7.800 M6 4.500 L7.300 5.800 M8 2.500 L9.300 3.800"/></svg>
    <svg class="abs" style="left:7px;top:62.500px" width="14" height="14" viewBox="0 0 14 14" fill="none" stroke="#50555c" stroke-width="1" stroke-linecap="round"><circle cx="7" cy="7" r="4.600"/><path d="M7 .8 V4 M7 10 V13.200 M.8 7 H4 M10 7 H13.200"/></svg>
    <div class="abs" style="left:17px;top:1px;width:10px;height:10px;border-radius:50%;background:#0b6cb3;color:#fff;font-size:7px;font-weight:bold;line-height:10px;text-align:center">!</div>
  </div>

  <!-- zoom -->
  <div class="mbox" style="left:705px;top:482px;width:27.500px;height:54.500px">
    <svg class="abs" style="left:9.500px;top:9px" width="9" height="9" viewBox="0 0 9 9" stroke="#50555c" stroke-width="1" stroke-linecap="round"><path d="M4.500 .5 V8.500 M.5 4.500 H8.500"/></svg>
    <svg class="abs" style="left:9.500px;top:36.500px" width="9" height="9" viewBox="0 0 9 9" stroke="#50555c" stroke-width="1" stroke-linecap="round"><path d="M.5 4.500 H8.500"/></svg>
  </div>

  <!-- mini map -->
  <div class="abs" style="left:606.500px;top:486.500px;width:88px;height:50.500px;background:#6f767b;border:2px solid #f4f5f6">
    <svg class="abs" style="left:0;top:0" width="84" height="46.500" viewBox="0 0 84 46.500">
      <g stroke="#7f878b" stroke-width=".6" fill="none"><path d="M0 12 Q20 6 40 14 T84 10 M10 0 Q14 24 6 46 M50 0 Q46 20 58 46 M0 34 Q30 28 84 38"/></g>
      <g fill="#d79a9a"><rect x="18" y="19" width="4" height="2"/><rect x="69" y="5" width="4" height="2"/><rect x="12" y="33" width="5" height="2"/><rect x="66" y="18" width="3" height="2"/><rect x="28" y="42" width="4" height="2"/></g>
      <g fill="#d8cf8f"><rect x="34" y="19.500" width="4" height="2"/><rect x="59" y="18" width="3" height="2"/><rect x="79" y="33" width="3" height="2"/><rect x="31" y="38" width="3" height="2"/></g>
      <g fill="#b9c0c4"><rect x="8" y="3" width="5" height="1"/><rect x="26" y="5" width="6" height="1"/><rect x="33" y="13" width="7" height="1"/><rect x="4" y="28" width="8" height="1"/><rect x="17" y="27" width="6" height="1"/><rect x="38" y="29" width="9" height="1"/><rect x="54" y="28" width="7" height="1"/><rect x="64" y="10" width="7" height="1"/><rect x="75" y="3" width="5" height="1"/><rect x="66" y="22" width="6" height="1"/><rect x="72" y="27" width="5" height="1"/><rect x="37" y="41" width="8" height="1"/><rect x="58" y="41" width="7" height="1"/><rect x="45" y="8" width="4" height="1"/></g>
      <rect x="50" y="0" width="5" height="1.500" fill="#9fd0d6"/>
    </svg>
  </div>
</div>


</body>
</html>
